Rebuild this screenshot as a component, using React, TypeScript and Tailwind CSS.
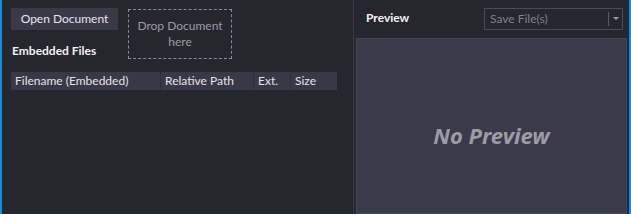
const FONT = { fontFamily: 'Lato, "Noto Sans", sans-serif' };
const PREVIEW_FONT = { fontFamily: '"Noto Sans", "Open Sans", sans-serif' };

const COLUMNS = [
  { label: 'Filename (Embedded)', width: 'w-[149px]' },
  { label: 'Relative Path', width: 'w-[93px]' },
  { label: 'Ext.', width: 'w-[37px]' },
  { label: 'Size', width: 'flex-1' },
];

export default function App() {
  return (
    <div
      style={FONT}
      className="flex h-[214px] w-[631px] overflow-hidden border-l-2 border-r-2 border-[#0b8fe3] bg-[#26262f] text-[12px]"
    >
      {/* ─── Left: embedded files ─── */}
      <div className="flex w-[351px] flex-col pl-[9px] pt-[8px]">
        <div className="flex gap-[10px]">
          <div className="flex flex-col">
            <button className="flex h-[22px] w-[107px] items-center justify-center bg-[#3a3948] text-[#e6e6ea]">
              Open Document
            </button>
            <div className="mt-[12px] pl-[1px] font-bold text-[#f2f2f4]">Embedded Files</div>
          </div>
          <div className="mt-[1px] flex h-[50px] w-[104px] items-center justify-center border border-dashed border-[#8b8a96] text-center leading-[16px] text-[#9b9aa5]">
            Drop Document
            <br />
            here
          </div>
        </div>

        <div className="mt-[12px] flex h-[18px] w-[326px] bg-[#393847] text-[#e4e4e8]">
          {COLUMNS.map((c, i) => (
            <div
              key={c.label}
              className={`${c.width} flex items-center pl-[4px] leading-none ${i > 0 ? 'border-l border-[#2e2d3a]' : ''}`}
            >
              {c.label}
            </div>
          ))}
        </div>
      </div>

      {/* splitter */}
      <div className="w-[3px] border-l border-[#3a3946]" />

      {/* ─── Right: preview ─── */}
      <div className="flex flex-1 flex-col">
        <div className="flex h-[38px] items-start justify-between pt-[8px] pr-[6px]">
          <div className="pl-[10px] pt-[1px] font-bold text-[#f2f2f4]">Preview</div>
          <div className="flex h-[22px] w-[139px] items-center border border-[#4a4958] text-[#807f8b]">
            <span className="flex-1 pl-[5px]">Save File(s)</span>
            <span className="h-[14px] w-px bg-[#5a5966]" />
            <span className="flex w-[13px] justify-center">
              <svg width="6" height="4" viewBox="0 0 6 4">
                <path d="M0 0h6L3 3z" fill="#9a99a4" />
              </svg>
            </span>
          </div>
        </div>
        <div className="mr-[2px] flex flex-1 items-center justify-center border border-[#45445a] bg-[#3b3a4a] pt-[18px]">
          <span style={PREVIEW_FONT} className="text-[22px] font-bold italic text-[#9d9ca4]">
            No Preview
          </span>
        </div>
      </div>
    </div>
  );
}
